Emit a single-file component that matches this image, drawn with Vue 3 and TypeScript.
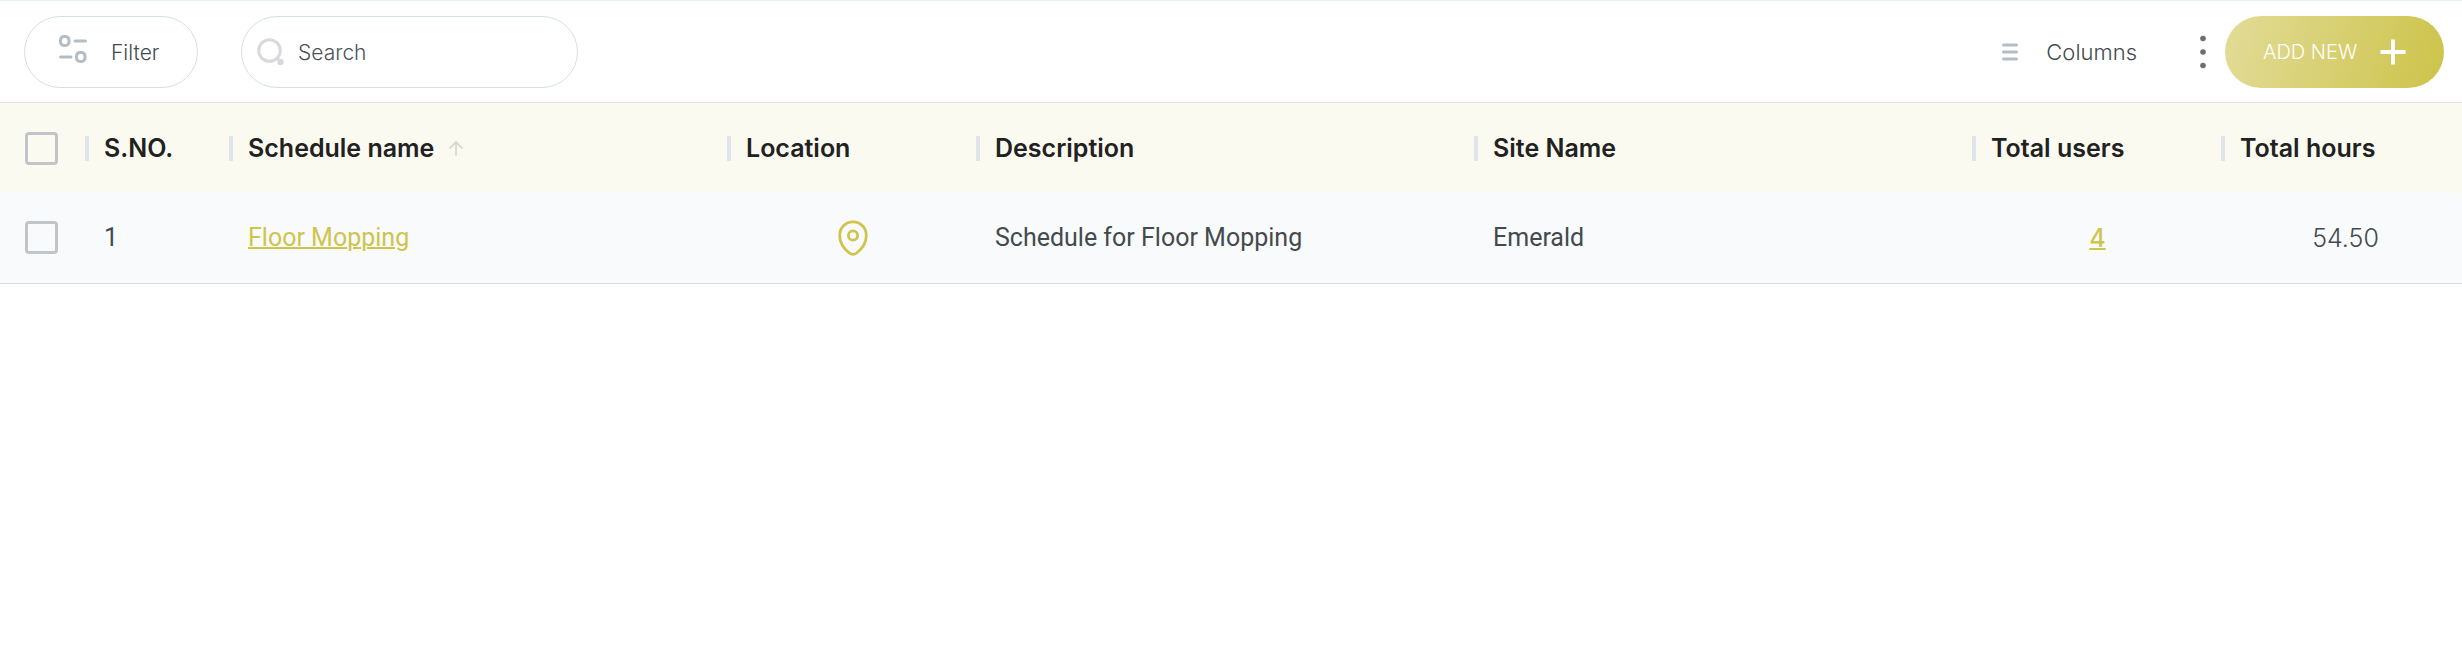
<script setup lang="ts">
import { ref, computed } from 'vue'

interface Schedule {
  id: number
  name: string
  description: string
  site: string
  users: number
  hours: string
}

const query = ref('')
const selected = ref<number[]>([])
const schedules: Schedule[] = [
  { id: 1, name: 'Floor Mopping', description: 'Schedule for Floor Mopping', site: 'Emerald', users: 4, hours: '54.50' },
]

const visible = computed(() =>
  schedules.filter((s) => s.name.toLowerCase().includes(query.value.trim().toLowerCase())),
)
const allSelected = computed({
  get: () => selected.value.length === schedules.length,
  set: (on: boolean) => {
    selected.value = on ? schedules.map((s) => s.id) : []
  },
})
</script>

<template>
  <main class="page">
    <div class="toolbar">
      <button type="button" class="pill filter">
        <svg width="28" height="28" viewBox="0 0 28 28" fill="none" stroke="#b2bec3" stroke-width="3" stroke-linecap="round" aria-hidden="true">
          <rect x="1.5" y="1.5" width="8.500" height="9" rx="3.500" />
          <path d="M16 6h10.500M1.500 22h10.500" />
          <rect x="17.500" y="17.500" width="8.500" height="9" rx="3.500" />
        </svg>
        <span>Filter</span>
      </button>
      <label class="pill search">
        <svg width="28" height="28" viewBox="0 0 28 28" fill="none" aria-hidden="true">
          <circle cx="12.500" cy="12.500" r="10.800" stroke="#d7d9dd" stroke-width="3" />
          <circle cx="23.500" cy="24" r="3.200" fill="#d7d9dd" />
          <path d="M20 20l3 3" stroke="#d7d9dd" stroke-width="3" />
        </svg>
        <input v-model="query" type="search" placeholder="Search" aria-label="Search" />
      </label>
      <div class="actions">
        <button type="button" class="plain">
          <svg width="16" height="18" viewBox="0 0 16 18" stroke="#b2bec3" stroke-width="3" stroke-linecap="round" aria-hidden="true">
            <path d="M1.500 2h13M1.500 9h13M1.500 16h13" />
          </svg>
          <span>Columns</span>
        </button>
        <button type="button" class="more" aria-label="More options">
          <svg width="6" height="34" viewBox="0 0 6 34" fill="#6e6e6e" aria-hidden="true">
            <circle cx="3" cy="3.500" r="2.800" />
            <circle cx="3" cy="17" r="2.800" />
            <circle cx="3" cy="30.500" r="2.800" />
          </svg>
        </button>
        <button type="button" class="add">
          <span>ADD NEW</span>
          <svg width="26" height="26" viewBox="0 0 26 26" stroke="#fff" stroke-width="4" aria-hidden="true">
            <path d="M13 0.500v25M0.500 13h25" />
          </svg>
        </button>
      </div>
    </div>

    <table>
      <colgroup>
        <col class="c-check" />
        <col class="c-no" />
        <col />
        <col class="c-mid" />
        <col />
        <col />
        <col class="c-mid" />
        <col class="c-hours" />
      </colgroup>
      <thead>
        <tr>
          <th class="check"><input v-model="allSelected" type="checkbox" aria-label="Select all schedules" /></th>
          <th scope="col"><div class="head">S.NO.</div></th>
          <th scope="col" aria-sort="ascending">
            <div class="head">
              Schedule name
              <svg width="16" height="16" viewBox="0 0 16 16" fill="none" stroke="#dadbd2" stroke-width="2" aria-hidden="true">
                <path d="M8 15.500V2M1.500 8.500L8 2l6.500 6.500" />
              </svg>
            </div>
          </th>
          <th scope="col"><div class="head">Location</div></th>
          <th scope="col"><div class="head">Description</div></th>
          <th scope="col"><div class="head">Site Name</div></th>
          <th scope="col"><div class="head">Total users</div></th>
          <th scope="col"><div class="head">Total hours</div></th>
        </tr>
      </thead>
      <tbody>
        <tr v-for="s in visible" :key="s.id">
          <td class="check"><input v-model="selected" type="checkbox" :value="s.id" :aria-label="`Select ${s.name}`" /></td>
          <td>{{ s.id }}</td>
          <td><a href="#schedule">{{ s.name }}</a></td>
          <td class="center">
            <button type="button" class="pin" :aria-label="`Show location of ${s.name}`">
              <svg width="30" height="36" viewBox="0 0 30 36" fill="none" stroke="#cfc44c" stroke-width="2.800" aria-hidden="true">
                <path d="M15 1.800C7.500 1.800 1.700 7.600 1.700 15.400c0 6.600 3.800 13 9.600 17.600 2.500 1.900 4.900 1.900 7.400 0 5.800-4.600 9.600-11 9.600-17.600C28.300 7.600 22.500 1.800 15 1.800z" />
                <circle cx="15" cy="15.500" r="4.600" />
              </svg>
            </button>
          </td>
          <td>{{ s.description }}</td>
          <td>{{ s.site }}</td>
          <td class="center number"><a href="#users">{{ s.users }}</a></td>
          <td class="center number hours">{{ s.hours }}</td>
        </tr>
      </tbody>
    </table>
  </main>
</template>

<style>
body {
  margin: 0;
  background: #fff;
}
</style>

<style scoped>
.page {
  font-family: Inter, "Liberation Sans", sans-serif;
  color: #434a4d;
  border-top: 1px solid #e8eff9;
}

button {
  font: inherit;
  color: inherit;
  background: none;
  border: 0;
  padding: 0;
  cursor: pointer;
}

svg {
  display: block;
  flex: none;
}

.toolbar {
  display: flex;
  align-items: center;
  padding: 15px 18px 14px 24px;
  border-bottom: 1px solid #dfe2e8;
  font-size: 21px;
  font-weight: 300;
}

.pill {
  box-sizing: border-box;
  display: flex;
  align-items: center;
  height: 72px;
  border: 1px solid #d7dfe2;
  border-radius: 36px;
  background: #fff;
}

.filter {
  width: 174px;
  padding-left: 34px;
  gap: 24px;
}

.filter svg {
  margin-bottom: 6px;
}

.search {
  width: 337px;
  margin-left: 43px;
  padding: 0 24px 0 15px;
  gap: 13px;
}

.search input {
  flex: 1;
  min-width: 0;
  padding: 0;
  border: 0;
  outline: 0;
  background: none;
  font: inherit;
  color: inherit;
}

.search input::placeholder {
  color: #4c5356;
  opacity: 1;
}

.actions {
  display: flex;
  align-items: center;
  margin-left: auto;
}

.plain {
  display: flex;
  align-items: center;
  gap: 28px;
  font-size: 22px;
}

.more {
  padding: 0 19px 0 63px;
}

.add {
  box-sizing: border-box;
  display: flex;
  align-items: center;
  justify-content: space-between;
  width: 219px;
  height: 72px;
  padding: 0 38px;
  border-radius: 36px;
  background: linear-gradient(105deg, #e2dc98, #cdc34a);
  color: #fff;
  font-size: 20px;
}

table {
  width: 100%;
  table-layout: fixed;
  border-collapse: collapse;
}

.c-check {
  width: 85px;
}

.c-no {
  width: 144px;
}

.c-mid {
  width: 249px;
}

.c-hours {
  width: 241px;
}

th,
td {
  box-sizing: border-box;
  height: 90px;
  padding: 0 0 0 19px;
  text-align: left;
  vertical-align: middle;
  white-space: nowrap;
}

th {
  padding: 0;
  background: #fafaf0;
  color: #212121;
  font-size: 25px;
  font-weight: 600;
}

.head {
  display: flex;
  align-items: center;
  gap: 14px;
  height: 25px;
  padding-left: 15px;
  border-left: 4px solid #e0e5eb;
}

td {
  background: #f8fafc;
  font-family: Roboto, "Liberation Sans", sans-serif;
  font-size: 25px;
}

tbody tr {
  border-bottom: 1px solid #d9dbdd;
}

.check {
  padding: 0 0 0 25px;
}

.check input {
  display: block;
  appearance: none;
  width: 33px;
  height: 33px;
  margin: 0;
  border: 3px solid #c2c5c8;
  border-radius: 4px;
}

.check input:checked {
  background: #cfc44c;
}

td.center {
  padding: 0 0 0 2px;
  text-align: center;
}

td.number {
  font-family: Inter, "Liberation Sans", sans-serif;
  font-weight: 300;
}

td.hours {
  padding-left: 8px;
}

a {
  color: #cfc44c;
  text-decoration: underline;
  text-decoration-thickness: 2px;
}

.number a {
  font-weight: 500;
}

.pin {
  display: inline-block;
  vertical-align: middle;
}
</style>
